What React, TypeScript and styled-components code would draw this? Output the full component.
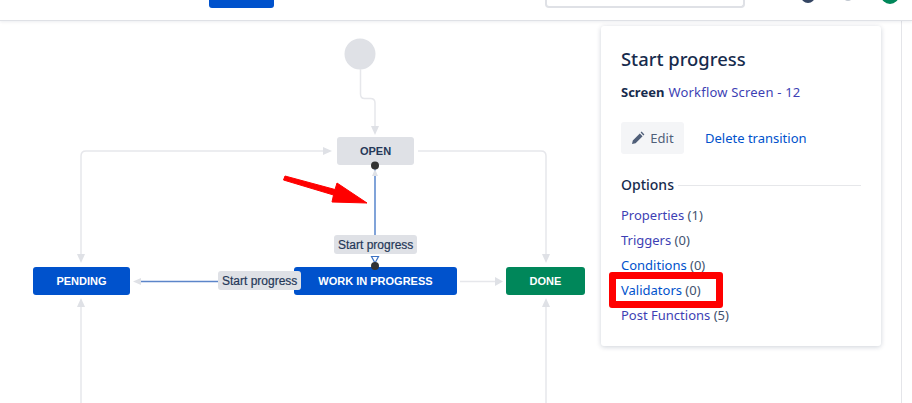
import React from 'react';
import styled, { createGlobalStyle } from 'styled-components';

const Global = createGlobalStyle`
    html, body {
        margin: 0;
        padding: 0;
        background: #fff;
        overflow: hidden;
    }
    body {
        font-family: "Noto Sans", "Open Sans", sans-serif;
        color: #172b4d;
    }
`;

const Page = styled.div`
    width: 912px;
    height: 403px;
    display: flex;
    flex-direction: column;
    overflow: hidden;
`;

const TopBar = styled.header`
    flex: none;
    height: 20px;
    display: flex;
    align-items: flex-start;
    border-bottom: 1px solid #dfe1e6;
    box-shadow: 0 1px 3px rgba(9, 30, 66, 0.08);
    overflow: hidden;
    position: relative;
    z-index: 2;
    background: #fff;
`;

const CreateButton = styled.div`
    width: 65px;
    height: 8px;
    margin-left: 209px;
    background: #0052cc;
    border-radius: 0 0 3px 3px;
`;

const SearchBox = styled.div`
    box-sizing: border-box;
    width: 200px;
    height: 8px;
    margin-left: 271px;
    border: 2px solid #dfe1e6;
    border-top: 0;
    border-radius: 0 0 4px 4px;
`;

const HeaderDot = styled.div<{ $size: number; $color: string; $gap: number; $up: number }>`
    flex: none;
    width: ${p => p.$size}px;
    height: ${p => p.$size}px;
    margin-left: ${p => p.$gap}px;
    margin-top: ${p => -p.$up}px;
    border-radius: 50%;
    background: ${p => p.$color};
`;

const Body = styled.div`
    flex: 1;
    display: flex;
    min-height: 0;
`;

const Canvas = styled.div`
    position: relative;
    flex: none;
    width: 601px;
`;

const Edges = styled.svg`
    position: absolute;
    left: 0;
    top: 0;
    width: 601px;
    height: 382px;
`;

const Node = styled.div<{ $x: number; $y: number; $w: number; $bg: string; $fg: string }>`
    position: absolute;
    left: ${p => p.$x}px;
    top: ${p => p.$y}px;
    width: ${p => p.$w}px;
    height: 28px;
    display: flex;
    align-items: center;
    justify-content: center;
    border-radius: 3px;
    background: ${p => p.$bg};
    color: ${p => p.$fg};
    font: bold 11px/1 "Liberation Sans", Arial, sans-serif;
`;

const EdgeLabel = styled.div<{ $x: number; $y: number }>`
    position: absolute;
    left: ${p => p.$x}px;
    top: ${p => p.$y}px;
    height: 19px;
    padding: 0 4px;
    display: flex;
    align-items: center;
    border-radius: 3px;
    background: #dfe1e6;
    color: #253858;
    font: 400 12px/1 "Liberation Sans", Arial, sans-serif;
    -webkit-text-stroke: 0.2px #253858;
    white-space: nowrap;
`;

const Panel = styled.aside`
    box-sizing: border-box;
    flex: none;
    width: 280px;
    height: 320px;
    margin-top: 5px;
    padding: 18px 20px 0;
    border-radius: 3px;
    background: #fff;
    box-shadow: 0 1px 5px rgba(9, 30, 66, 0.2);
`;

const Title = styled.h2`
    margin: 0;
    font-size: 18.4px;
    line-height: 30px;
    font-weight: 500;
    color: #172b4d;
`;

const ScreenRow = styled.div`
    margin-top: 8px;
    font-size: 13px;
    line-height: 20px;
`;

const Strong = styled.strong`
    font-weight: 700;
    margin-right: 4px;
`;

const Link = styled.a<{ $visited?: boolean }>`
    color: ${p => (p.$visited ? '#3d3fb4' : '#0052cc')};
    text-decoration: none;
`;

const WideLink = styled(Link)`
    letter-spacing: 0.2px;
`;

const Actions = styled.div`
    margin-top: 20px;
    display: flex;
    align-items: center;
    gap: 21px;
    font-size: 13px;
`;

const EditButton = styled.button`
    width: 63px;
    height: 32px;
    padding: 0;
    display: flex;
    align-items: center;
    justify-content: center;
    gap: 5px;
    border: 0;
    border-radius: 3px;
    background: #f4f5f7;
    color: #505f79;
    font: inherit;
`;

const OptionsHead = styled.div`
    margin-top: 19px;
    display: flex;
    align-items: center;
    gap: 4px;
    font-size: 14px;
    line-height: 24px;
    font-weight: 500;
    &::after {
        content: "";
        flex: 1;
        height: 1px;
        background: #e6e7ea;
    }
`;

const OptionList = styled.ul`
    list-style: none;
    margin: 6px 0 0;
    padding: 0;
`;

const Option = styled.li`
    position: relative;
    height: 25px;
    font-size: 13px;
    line-height: 25px;
    color: #42526e;
`;

const Highlight = styled.span`
    position: absolute;
    left: -12px;
    top: -6px;
    width: 114px;
    height: 36px;
    box-sizing: border-box;
    border: 7px solid #ff0000;
    border-radius: 3px;
    pointer-events: none;
`;

const Rail = styled.div`
    flex: none;
    width: 1px;
    margin-left: 20px;
    background: #e4e5e9;
`;

const options = [
    { name: 'Properties', count: 1, visited: true },
    { name: 'Triggers', count: 0, visited: true },
    { name: 'Conditions', count: 0 },
    { name: 'Validators', count: 0, marked: true },
    { name: 'Post Functions', count: 5, visited: true },
];

// coordinates on this svg are canvas coordinates, y = page y - 21
function DiagramEdges() {
    const grey = '#e6e7eb';
    const head = '#dfe1e6';
    return (
        <Edges viewBox="0 0 601 382" fill="none">
            <circle cx="360" cy="33" r="15.5" fill={head} />
            <path d="M360.5 48V73q0 4.5 4 4.5h6q4.5 0 4.5 4.5V106" stroke={grey} strokeWidth="1.5" />
            <path d="M371 105h8l-4 9z" fill={head} />

            <path d="M325 130H86q-5 0-5 5V234" stroke={grey} strokeWidth="1.5" />
            <path d="M323 126l9 4-9 4z" fill={head} />
            <path d="M77 233h8l-4 9z" fill={head} />
            <path d="M81 382V285" stroke={grey} strokeWidth="1.5" />
            <path d="M77 286h8l-4-9z" fill={head} />

            <path d="M418 130H541q5 0 5 5V234" stroke={grey} strokeWidth="1.5" />
            <path d="M542 233h8l-4 9z" fill={head} />
            <path d="M546 382V285" stroke={grey} strokeWidth="1.5" />
            <path d="M542 286h8l-4-9z" fill={head} />

            <path d="M460 260.5H497" stroke={grey} strokeWidth="1.5" />
            <path d="M495 256l8 4.5-8 4.5z" fill={head} />

            <path d="M375 146v69" stroke="#3d72c4" strokeWidth="1.3" />
            <path d="M372 155l3-7 3 7z" fill={head} />
            <path d="M371.5 235.5h7l-3.5 6.5z" fill="#fff" stroke="#3d72c4" strokeWidth="1.2" />

            <path d="M140 260.5H218" stroke="#5c85c9" strokeWidth="1.6" />
            <path d="M141 257v7l-8-3.5z" fill={head} />
        </Edges>
    );
}

function Marks() {
    return (
        <Edges viewBox="0 0 601 382" fill="none">
            <circle cx="375" cy="144.5" r="4" fill="#333" />
            <circle cx="375" cy="245" r="4" fill="#333" />
            <path
                d="M285 155L335 168.5L337 162L367 182L332 181L333.5 174L283.5 159Z"
                fill="#ff0000"
                stroke="#ff0000"
                strokeWidth="1"
                strokeLinejoin="round"
            />
        </Edges>
    );
}

export default function App() {
    return (
        <Page>
            <Global />
            <TopBar>
                <CreateButton />
                <SearchBox />
                <HeaderDot $size={14} $color="#344563" $gap={56} $up={11} />
                <HeaderDot $size={8} $color="#c1c7d0" $gap={29} $up={7} />
                <HeaderDot $size={18} $color="#00875a" $gap={29} $up={14} />
            </TopBar>
            <Body>
                <Canvas>
                    <DiagramEdges />
                    <Node $x={337} $y={116} $w={77} $bg="#dfe1e6" $fg="#253858">OPEN</Node>
                    <Node $x={33} $y={246} $w={97} $bg="#0052cc" $fg="#fff">PENDING</Node>
                    <Node $x={294} $y={246} $w={163} $bg="#0052cc" $fg="#fff">WORK IN PROGRESS</Node>
                    <Node $x={506} $y={246} $w={79} $bg="#00875a" $fg="#fff">DONE</Node>
                    <EdgeLabel $x={334} $y={214}>Start progress</EdgeLabel>
                    <EdgeLabel $x={218} $y={250}>Start progress</EdgeLabel>
                    <Marks />
                </Canvas>
                <Panel>
                    <Title>Start progress</Title>
                    <ScreenRow>
                        <Strong>Screen</Strong>
                        <WideLink $visited>Workflow Screen - 12</WideLink>
                    </ScreenRow>
                    <Actions>
                        <EditButton>
                            <svg width="14" height="14" viewBox="0 0 14 14">
                                <path d="M1 13l.8-3.6 7-7 2.8 2.8-7 7zM9.6 1.6l1-1 2.8 2.8-1 1z" fill="#505f79" />
                            </svg>
                            Edit
                        </EditButton>
                        <Link>Delete transition</Link>
                    </Actions>
                    <OptionsHead>Options</OptionsHead>
                    <OptionList>
                        {options.map(o => (
                            <Option key={o.name}>
                                <Link $visited={o.visited}>{o.name}</Link> ({o.count})
                                {o.marked && <Highlight />}
                            </Option>
                        ))}
                    </OptionList>
                </Panel>
                <Rail />
            </Body>
        </Page>
    );
}
